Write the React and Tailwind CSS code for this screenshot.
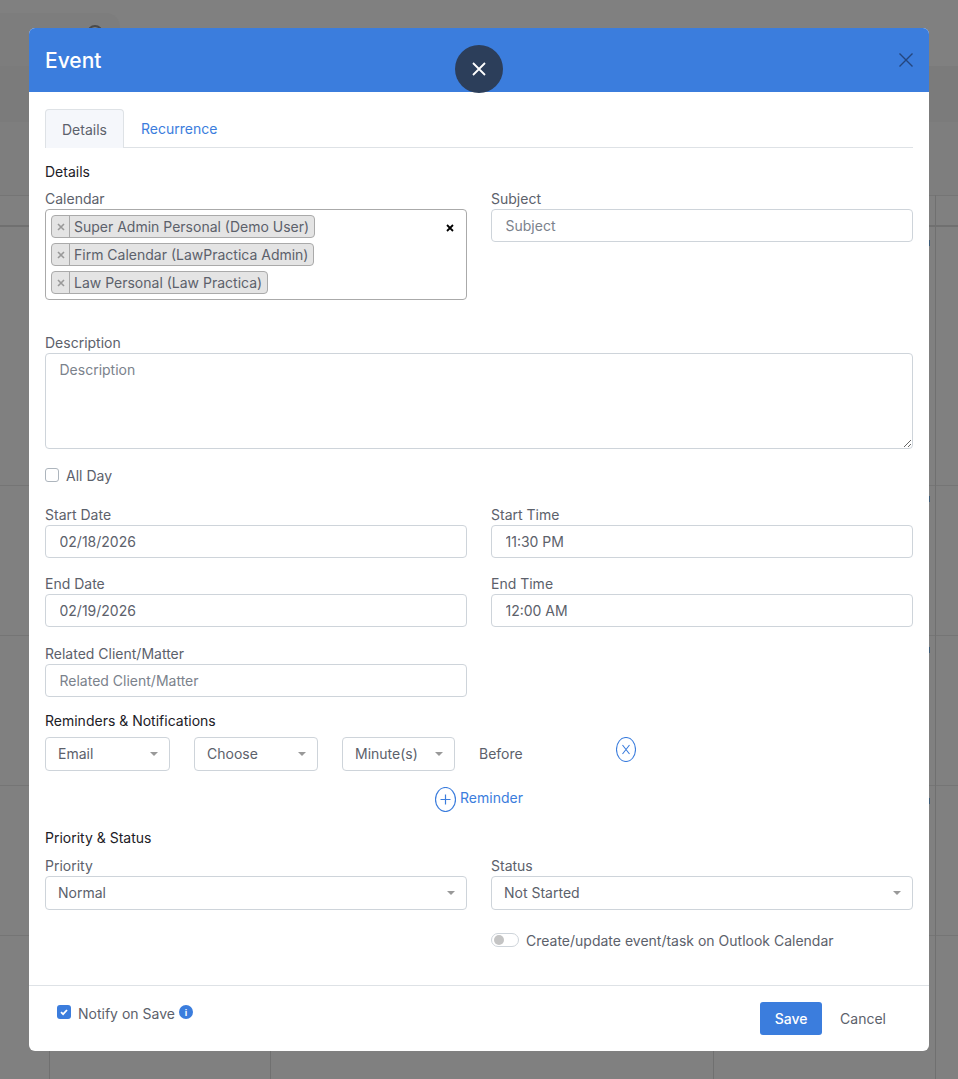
const Label = ({ children }) => (
  <label className="block h-[20px] leading-[20px] text-[14px] text-[#5c616b]">{children}</label>
);

const Heading = ({ children }) => (
  <div className="h-[20px] leading-[20px] text-[14px] text-[#1c2026]">{children}</div>
);

const TextInput = ({ value, placeholder, className = 'w-full' }) => (
  <input
    readOnly
    value={value}
    placeholder={placeholder}
    className={`block h-[33px] rounded-[4px] border border-[#ced4da] bg-white px-[13.5px] text-[14px] text-[#5c616b] outline-none placeholder:text-[#7b828c] ${className}`}
  />
);

const Caret = () => (
  <span className="h-0 w-0 border-x-[4px] border-t-[4px] border-x-transparent border-t-[#999999]" />
);

const Select = ({ value, className }) => (
  <div className={`flex h-[34px] items-center justify-between rounded-[4px] border border-[#ced4da] bg-white pb-[1px] pl-[12px] pr-[11px] text-[14px] text-[#5c616b] ${className}`}>
    <span>{value}</span>
    <Caret />
  </div>
);

const Chip = ({ children }) => (
  <div className="flex h-[23px] items-stretch rounded-[4px] border border-[#aaaaaa] bg-[#e4e4e4] text-[14px] leading-[21px] text-[#5c616b]">
    <span className="flex w-[18px] items-center justify-center border-r border-[#aaaaaa] text-[#999999]">
      <svg width="8" height="8" viewBox="0 0 8 8" fill="none" stroke="#999999" strokeWidth="1.6">
        <path d="M1 1l6 6M7 1L1 7" />
      </svg>
    </span>
    <span className="pl-[4px] pr-[5px]">{children}</span>
  </div>
);

const App = () => {
  return (
    <div className="relative h-[1079px] w-[958px] overflow-hidden bg-[#808080] font-['Inter','Liberation_Sans',sans-serif]">
      {/* Calendar page showing through the backdrop */}
      <div className="absolute inset-x-0 top-[66px] h-[56px] bg-[#7b7b7b]" />
      <div className="absolute inset-x-0 top-[122px] h-[73px] bg-[#7e7e7e]" />
      <div className="absolute left-0 top-[13px] h-[53px] w-[120px] rounded-tr-[14px] bg-[#7d7d7d]" />
      <div className="absolute inset-x-0 top-[195px] h-px bg-[#757575]" />
      <div className="absolute inset-x-0 top-[225px] h-[2px] bg-[#707070]" />
      <div className="absolute inset-x-0 top-[485px] h-px bg-[#757575]" />
      <div className="absolute inset-x-0 top-[635px] h-px bg-[#757575]" />
      <div className="absolute inset-x-0 top-[785px] h-px bg-[#757575]" />
      <div className="absolute inset-x-0 top-[935px] h-px bg-[#757575]" />
      <div className="absolute bottom-0 left-[49px] h-[144px] w-px bg-[#707070]" />
      <div className="absolute bottom-0 left-[270px] h-[144px] w-px bg-[#707070]" />
      <div className="absolute bottom-0 left-[713px] h-[144px] w-px bg-[#707070]" />
      <div className="absolute bottom-0 left-[935px] top-[195px] w-px bg-[#707070]" />
      <div className="absolute left-[87px] top-[25px] h-[16px] w-[16px] rounded-full border-2 border-[#4a4a4a]" />
      <div className="absolute left-[929px] top-[240px] h-[6px] w-px bg-[#3c5a75]" />
      <div className="absolute left-[929px] top-[496px] h-[6px] w-px bg-[#3c5a75]" />
      <div className="absolute left-[929px] top-[647px] h-[6px] w-px bg-[#3c5a75]" />
      <div className="absolute left-[929px] top-[798px] h-[6px] w-px bg-[#3c5a75]" />

      {/* Modal */}
      <div className="relative ml-[29px] mt-[28px] h-[1023px] w-[900px] overflow-hidden rounded-[6px] bg-white">
        <div className="flex h-[64px] items-center justify-between bg-[#3b7ddd] pl-[16px] pr-[16px]">
          <h1 className="text-[21px] font-medium leading-[63px] text-white">Event</h1>
          <svg width="14" height="14" viewBox="0 0 14 14" fill="none" stroke="#24467e" strokeWidth="1.4">
            <path d="M0.5 0.5l13 13M13.5 0.5l-13 13" />
          </svg>
        </div>

        <div className="px-[16px] pt-[17px]">
          {/* Tabs */}
          <div className="flex h-[39px] border-b border-[#dee2e6] text-[14px]">
            <div className="flex h-[39px] w-[79px] items-center justify-center rounded-t-[4px] border border-b-0 border-[#dee2e6] bg-[#f5f7fb] text-[#5c616b]">
              Details
            </div>
            <div className="ml-[17px] flex h-[39px] items-center text-[#3b7ddd]">Recurrence</div>
          </div>

          <div className="mt-[14px]"><Heading>Details</Heading></div>

          {/* Calendar and subject */}
          <div className="mt-[7px] grid grid-cols-2 gap-x-[24px]">
            <div>
              <Label>Calendar</Label>
              <div className="relative h-[91px] rounded-[4px] border border-[#aaaaaa] pl-[5px] pt-[5px]">
                <div className="flex flex-col items-start gap-[5px]">
                  <Chip>Super Admin Personal (Demo User)</Chip>
                  <Chip>Firm Calendar (LawPractica Admin)</Chip>
                  <Chip>Law Personal (Law Practica)</Chip>
                </div>
                <svg className="absolute right-[12px] top-[14px]" width="8" height="8" viewBox="0 0 8 8" fill="none" stroke="#000000" strokeWidth="1.8">
                  <path d="M1 1l6 6M7 1L1 7" />
                </svg>
              </div>
            </div>
            <div>
              <Label>Subject</Label>
              <TextInput placeholder="Subject" />
            </div>
          </div>

          {/* Description */}
          <div className="mt-[33px]">
            <Label>Description</Label>
            <textarea
              readOnly
              placeholder="Description"
              className="block h-[96px] w-full rounded-[4px] border border-[#ced4da] px-[13.5px] py-[5px] text-[14px] outline-none placeholder:text-[#7b828c]"
            />
          </div>

          {/* All day */}
          <div className="mt-[16px] flex h-[20px] items-center gap-[7px] text-[14px] text-[#5c616b]">
            <span className="h-[14px] w-[14px] rounded-[3px] border border-[#adb5bd] bg-white" />
            All Day
          </div>

          {/* Dates and times */}
          <div className="mt-[20px] grid grid-cols-2 gap-x-[24px] gap-y-[16px]">
            <div>
              <Label>Start Date</Label>
              <TextInput value="02/18/2026" />
            </div>
            <div>
              <Label>Start Time</Label>
              <TextInput value="11:30 PM" />
            </div>
            <div>
              <Label>End Date</Label>
              <TextInput value="02/19/2026" />
            </div>
            <div>
              <Label>End Time</Label>
              <TextInput value="12:00 AM" />
            </div>
          </div>
          <div className="mt-[17px] w-[422px]">
            <Label>Related Client/Matter</Label>
            <TextInput placeholder="Related Client/Matter" />
          </div>

          {/* Reminders */}
          <div className="mt-[14px]"><Heading>Reminders &amp; Notifications</Heading></div>
          <div className="mt-[6px] flex h-[34px] items-center text-[14px] text-[#5c616b]">
            <Select value="Email" className="w-[125px]" />
            <Select value="Choose" className="ml-[24px] w-[124px]" />
            <Select value="Minute(s)" className="ml-[24px] w-[113px]" />
            <span className="mb-[1px] ml-[24px] w-[137px]">Before</span>
            <svg className="-mt-[9px]" width="20" height="25" viewBox="0 0 20 25" fill="none" stroke="#3b7ddd" strokeWidth="1.1">
              <ellipse cx="10" cy="12.5" rx="9.5" ry="12" />
              <path d="M6.5 8l7 9M13.5 8l-7 9" />
            </svg>
          </div>
          <div className="mt-[16px] flex h-[25px] items-center justify-center text-[14px] text-[#3b7ddd]">
            <svg width="21" height="25" viewBox="0 0 21 25" fill="none" stroke="#3b7ddd" strokeWidth="1.2">
              <ellipse cx="10.5" cy="12.5" rx="10" ry="12" />
              <path d="M10.5 7.5v10M5.5 12.5h10" />
            </svg>
            <span className="mb-[4px] ml-[4px]">Reminder</span>
          </div>

          {/* Priority and status */}
          <div className="mt-[16px]"><Heading>Priority &amp; Status</Heading></div>
          <div className="mt-[8px] grid grid-cols-2 gap-x-[24px]">
            <div>
              <Label>Priority</Label>
              <Select value="Normal" className="w-full" />
            </div>
            <div>
              <Label>Status</Label>
              <Select value="Not Started" className="w-full" />
            </div>
          </div>
          <div className="ml-[446px] mt-[20px] flex h-[20px] items-center gap-[7px] text-[14px] text-[#5c616b]">
            <span className="flex h-[14px] w-[28px] items-center rounded-full border border-[#ced4da] pl-[2px]">
              <span className="h-[10px] w-[10px] rounded-full bg-[#c4c4c4]" />
            </span>
            Create/update event/task on Outlook Calendar
          </div>
        </div>

        {/* Footer */}
        <div className="absolute inset-x-0 bottom-0 flex h-[66px] items-start border-t border-[#dee2e6] pl-[28px] pr-[43px]">
          <div className="mt-[16px] flex h-[20px] items-center text-[14px] text-[#5c616b]">
            <span className="flex h-[14px] w-[14px] items-center justify-center rounded-[3px] bg-[#3b7ddd]">
              <svg width="10" height="10" viewBox="0 0 10 10" fill="none" stroke="#ffffff" strokeWidth="1.8">
                <path d="M2 5.2l2.1 2L8 3" />
              </svg>
            </span>
            <span className="ml-[7px] mt-[2px]">Notify on Save</span>
            <span className="ml-[4px] flex h-[14px] w-[14px] items-center justify-center rounded-full bg-[#3b7ddd] text-[9px] font-bold leading-none text-white">i</span>
          </div>
          <button className="ml-auto mt-[16px] h-[33px] w-[62px] rounded-[3px] bg-[#3b7ddd] text-[14px] font-medium text-white">Save</button>
          <button className="ml-[18px] mt-[16px] h-[33px] text-[14px] text-[#5c616b]">Cancel</button>
        </div>
      </div>

      {/* Floating close button */}
      <div className="absolute left-[455px] top-[45px] flex h-[48px] w-[48px] items-center justify-center rounded-full bg-[#2c3e5a]">
        <svg width="14" height="14" viewBox="0 0 14 14" fill="none" stroke="#ffffff" strokeWidth="1.8">
          <path d="M1 1l12 12M13 1L1 13" />
        </svg>
      </div>
    </div>
  );
};

export default App;
